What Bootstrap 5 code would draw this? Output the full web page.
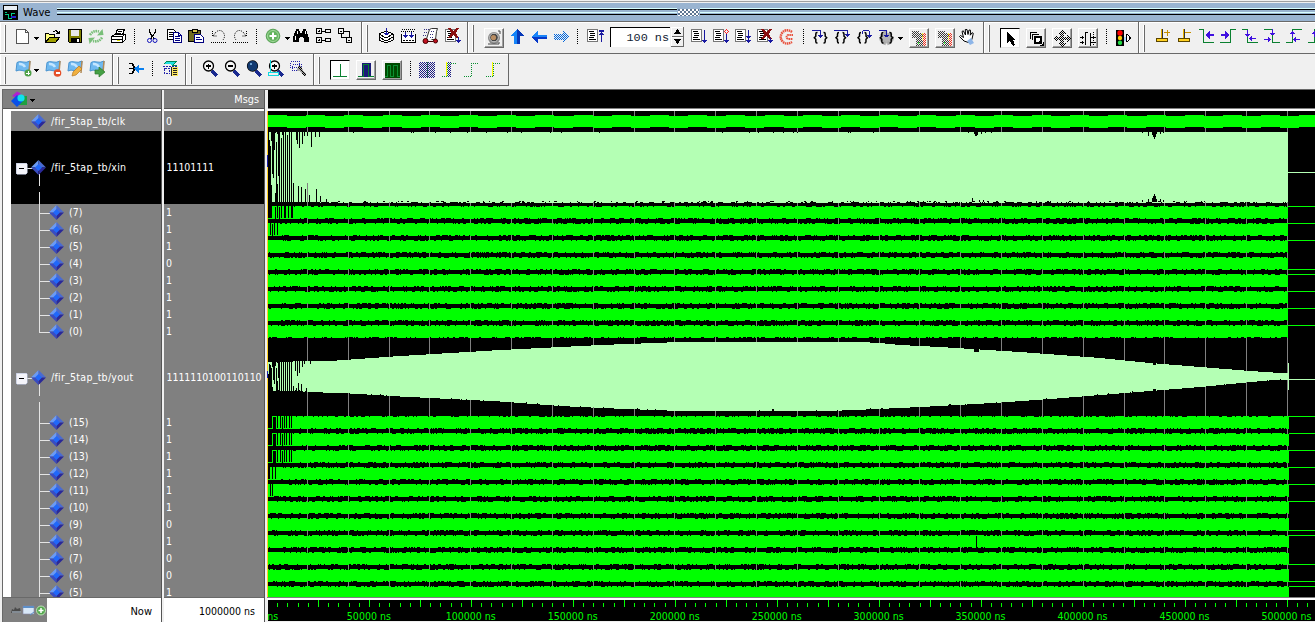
<!DOCTYPE html>
<html lang="en">
<head>
<meta charset="utf-8">
<title>Wave</title>
<meta name="viewport" content="width=device-width, initial-scale=1">
<link href="https://cdn.jsdelivr.net/npm/bootstrap@5.3.0/dist/css/bootstrap.min.css" rel="stylesheet">
<style>
body{width:1315px;height:622px;background:#f0f0f0;font:10.5px/13px "DejaVu Sans Condensed","DejaVu Sans",sans-serif;font-stretch:condensed;color:#000}
svg{display:block;flex:none;shape-rendering:crispEdges}
.topline{height:2px;border-bottom:1px solid #a0a0a0}
.titlebar{height:20px;background:#99b4d1;border-bottom:1px solid #696969;border-top:1px solid #f0f0f0}
.appicon{margin-left:2px}
.title-txt{font-size:11.2px;width:35px;padding-left:1px}
.rule{height:7px;margin-top:-1px;background:linear-gradient(#d8ffff 0 1px,#000 1px 2px,#99b4d1 2px 4px,#d8ffff 4px 5px,#99b4d1 5px 6px,#000 6px 7px)}
.rule-a{width:620px}
.dotgrip{width:21px;height:7px;background:repeating-conic-gradient(#fff 0 25%,#5d7591 0 50%) 0 0/4px 4px;margin:0 1px}
.tools{height:32px}
.group{border-right:1px solid #696969;border-bottom:1px solid #696969;box-shadow:inset 1px 1px #fff;height:32px;padding-top:4px;flex:none}
.grip{width:2px;height:27px;margin:-1px 0 0 4px;border-left:1px solid #fff;border-right:1px solid #696969;flex:none}
.ic{width:22px;height:22px}
.car{width:8px;height:22px;flex:none}
.sepr{width:11px;height:15px;margin-top:3px;flex:none;background:repeating-linear-gradient(#000 0 1px,transparent 1px 2px) 5px 0/1px 100% no-repeat}
.tbtn{width:20px;height:20px;margin:2px 1px 0;border:1px solid #fff;border-right-color:#696969;border-bottom-color:#696969;box-shadow:inset -1px -1px #a0a0a0;flex:none;overflow:hidden}
.tbtn.down{background:#fff;border-color:#000 #e3e3e3 #e3e3e3 #000;box-shadow:none}
.tbtn svg{margin:-2px}
.ml4{margin-left:5px}
.run{width:60px;height:20px;margin:1px 1px 0 4px;border:1px solid #000;border-width:1px 0 0 1px;background:#fff;font:11.8px/21px "Liberation Mono",monospace;color:#123;text-align:right;padding-right:1px;flex:none}
.spin{width:14px;margin:1px 3px 0 0;flex:none}
.gap-y{height:3px}
.panes{height:533px;border-top:1px solid #696969;margin-left:2px}
.hd{height:19px;border-bottom:1px solid #555;background:#808080;color:#fff}
.hd-msgs{padding:3px 5px 0 0;font-size:10.8px}
.hd-wave{background:#000;border-bottom-color:#808080;margin-left:1px}
.body-h{height:488px;border-top:2px solid #fff;overflow:hidden}
.names{width:160px;border-left:1px solid #696969;border-right:1px solid #555;background:#fff;flex:none}
.vals{width:101px;margin-left:2px;border-right:1px solid #555;flex:none;background:#808080}
.names .body-h{padding-left:8px}
.wavep{margin-left:2px;width:1048px;flex:none}
.sig,.val{background:#808080;color:#fff}
.sig span{letter-spacing:.27px}
.sig.r17 span{letter-spacing:.05px}
.sig.sel,.val.sel{background:#000}
.r20{height:20px}.r73{height:73px}.r74{height:74px}.r17{height:17px}
.val{padding-left:2px}.val.wide{padding-left:2.5px;letter-spacing:-.07px}
.foot{height:25px;border-top:1px solid #696969;background:#fff;padding-top:2px}
.ficons{width:44px;background:#808080;flex:none;margin-top:-2px;height:24px}
.now-l{padding-right:9px;font-size:11px}
.now-v{padding-right:9px}
#ruler text{font:10.5px "DejaVu Sans Condensed","DejaVu Sans",sans-serif;font-stretch:condensed;fill:#0f0;text-anchor:middle}
</style>
</head>
<body class="overflow-hidden m-0">
<svg width="0" height="0" class="position-absolute"><defs>
<pattern id="ht" width="2" height="2" patternUnits="userSpaceOnUse"><rect width="1" height="1" fill="#000"/><rect x="1" y="1" width="1" height="1" fill="#000"/></pattern>
<pattern id="hb" width="2" height="2" patternUnits="userSpaceOnUse"><rect width="1" height="1" fill="#1c1c80"/><rect x="1" y="1" width="1" height="1" fill="#1c1c80"/></pattern>
<pattern id="hr" width="2" height="2" patternUnits="userSpaceOnUse"><rect width="1" height="1" fill="#f03020"/><rect x="1" y="1" width="1" height="1" fill="#f03020"/></pattern>
<pattern id="hc" width="2" height="2" patternUnits="userSpaceOnUse"><rect width="1" height="1" fill="#06d"/><rect x="1" y="1" width="1" height="1" fill="#06d"/></pattern>
<symbol id="new"><path d="M5.500 3.500h9l3 3v11h-12z" fill="#fff" stroke="#555"/><path d="M14.500 3.500v3h3" fill="none" stroke="#555"/></symbol>
<symbol id="open"><path d="M4.500 16V7.500h3l1 1h5v3" fill="#ffff80" stroke="#000"/><path d="M4.500 16.500l4-5h10l-4 5z" fill="#a0a000" stroke="#000"/><path d="M12 5.500h1l2-1 2 2v1M15 7.500h4M18.500 5v3" fill="none" stroke="#000"/></symbol>
<symbol id="save"><path d="M5.500 3.500h13v13h-12l-1-1z" fill="#808000" stroke="#000"/><path d="M8 4h8v6h-8z" fill="#e8e8e8"/><path d="M8 12h9v5h-9z" fill="#000"/><path d="M14 13h2v3h-2z" fill="#fff"/></symbol>
<symbol id="refresh"><g shape-rendering="auto" fill="none" stroke="#79bf79" stroke-width="2.600" stroke-dasharray="1.600 .7"><path d="M5 9q3-5 9-3.500M17 11.500q-3 5-9 3.500"/></g><g shape-rendering="auto" fill="#79bf79"><path d="M12 9.500l6.500-.5-1-6zM10 11.500L3.500 12l1 6z"/></g></symbol>
<symbol id="print"><path d="M8.500 9l2-6h7l-2 6z" fill="#fff" stroke="#000"/><path d="M11 5.500h4M10 7.500h4" stroke="#000"/><path d="M4.500 10.500l3-2h11v5l-3 3h-11z" fill="#fff" stroke="#000"/><path d="M5 10.500h10l3-2M15.500 11v5M5 13.500h10" fill="none" stroke="#000"/><path d="M10 14h3v1h-3z" fill="#dd0"/></symbol>
<symbol id="cut"><path d="M8.500 3v3l5 7M14.500 3v3l-5 7" fill="none" stroke="#000" stroke-width="1.300"/><circle cx="8.500" cy="14.500" r="2" fill="none" stroke="#11b" shape-rendering="auto"/><circle cx="14" cy="14.500" r="2" fill="none" stroke="#11b" shape-rendering="auto"/></symbol>
<symbol id="copy"><path d="M4.500 3.500h6l2 2v8h-8z" fill="#fff" stroke="#000"/><path d="M6 6.500h4M6 8.500h5M6 10.500h4" stroke="#000"/><path d="M10.500 6.500h5l3 3v7h-8z" fill="#fff" stroke="#000080"/><path d="M12 10.500h5M12 12.500h5M12 14.500h5M15.500 6.500v3h3" fill="none" stroke="#000080"/></symbol>
<symbol id="paste"><path d="M3.500 4.500h12v11h-12z" fill="#706c20" stroke="#000"/><path d="M7 3h5v3h-5z" fill="#dcc850" stroke="#000"/><path d="M9.500 8.500h6l3 3v5h-9z" fill="#fff" stroke="#000080"/><path d="M11 11.500h4M11 13.500h6" stroke="#000080"/></symbol>
<symbol id="undo"><g fill="none" stroke="#000" shape-rendering="auto" stroke-dasharray="1 1"><path d="M5.500 5v5h5M6 10l3-4q4-3 7 0 3 4 0 8M4 16.500h15"/></g></symbol>
<symbol id="redo"><g fill="none" stroke="#000" shape-rendering="auto" stroke-dasharray="1 1"><path d="M17.500 5v5h-5M17 10l-3-4q-4-3-7 0-3 4 0 8M4 16.500h15"/></g></symbol>
<symbol id="plus"><g shape-rendering="auto"><circle cx="11" cy="10" r="6.800" fill="#62b35d" stroke="#5aa358"/><circle cx="11" cy="10" r="5.500" fill="none" stroke="#a4d89c"/><path d="M11 6.500v7M7.500 10h7" stroke="#fff" stroke-width="2"/></g></symbol>
<symbol id="bino"><path d="M6 3h3v2h1v2h2V5h1V3h3v2h1l1 5 1 2v4h-5v-4h-1v-1h-3v1h-1v4H3v-4l1-3 1-4h1z"/><path d="M5.500 10v4M7.500 5v3M15.500 5v3" stroke="#fff"/></symbol>
<symbol id="tree1"><path d="M4.500 2.500h5v5h-5zM4.500 11.500h5v5h-5zM6 5h2M6 14h2M7 4v2M7 13v2M10 5.500h3M10 14.500h3M13 3.500h5v3h-5zM13 12.500h5v3h-5z" fill="none" stroke="#000"/></symbol>
<symbol id="tree2"><path d="M4.500 2.500h5v5h-5zM12.500 11.500h5v5h-5zM6 5.500h2M14 14.500h2M10 5.500h5v5M7.500 8v3.500h5" fill="none" stroke="#000"/></symbol>
<symbol id="stack"><path d="M4 8l7-3 7 3-7 4zM4 11l7 4 7-4M4 14l7 3 7-3M4 8v6M18 8v6" fill="#fff" stroke="#000"/><path d="M11.500 2v7M9 7.500h5M10 8.500h3" stroke="#1818a0"/></symbol>
<symbol id="comp"><path d="M4.500 8v8.500h14V8" fill="#fff" stroke="#000"/><path d="M5 3.500h14M4 5.500h14" stroke="#000" stroke-dasharray="1 1"/><path d="M8.500 6v6M14.500 6v6M6 9.500h5M12 9.500h5M7 10.500h3M13 10.500h3" stroke="#1818a0"/><path d="M6 14.500h11" stroke="#000" stroke-dasharray="2 1"/></symbol>
<symbol id="script"><path d="M7.500 13l3-9.500 2-1h6l-1 3-1 8h-4" fill="#fff" stroke="#333" shape-rendering="auto"/><path d="M5 3.500h5M5 6.500h4M4 9.500h4M12 5.500h4M11 8.500h4M11 11.500h4" stroke="#333080" stroke-dasharray="1 1"/><g shape-rendering="auto"><circle cx="6.500" cy="15" r="2.500" fill="#c01020" stroke="#400"/><circle cx="16.500" cy="15" r="2" fill="#c01020" stroke="#400"/></g><path d="M9 15.500h5" stroke="#400"/></symbol>
<symbol id="doc"><path d="M4.500 3.500h10v12h-10z" fill="#fff" stroke="#777"/><path d="M6 5.500h5M7 7.500h5M7 9.500h5M6 11.500h5M6 13.500h7" stroke="#000"/></symbol>
<symbol id="docx"><use href="#doc"/><path d="M8 2l9 10M17 2L8 12" stroke="#8a1010" stroke-width="2.500"/><path d="M17.500 11v6M15 14.500h5M16 15.500h3" stroke="#1818a0"/></symbol>
<symbol id="snap"><g shape-rendering="auto"><circle cx="11" cy="11" r="6" fill="#888"/><path d="M15 4h2v3M5 17h11v-2" stroke="#444" fill="none"/><circle cx="11" cy="10.500" r="4.300" fill="#444" stroke="#ccc"/><circle cx="10.500" cy="10.500" r="2.600" fill="#b98d62"/></g></symbol>
<symbol id="up"><path d="M11 3l7 7h-4v8H8v-8H4z" fill="#1484f8"/><path d="M11 3l7 7h-4v8h-3z" fill="#0638b8"/></symbol>
<symbol id="left"><path d="M3 11l7-6v4h9v4h-9v4z" fill="#1984f8"/><path d="M3 11h16v2h-9v4z" fill="#0638c8"/></symbol>
<symbol id="right"><path d="M19 11l-6-6v3H4v6h9v3z" fill="url(#hc)"/></symbol>
<symbol id="restart"><g transform="translate(-1 0)"><use href="#doc"/></g><path d="M17.500 4v12M15 4.500h5M15 8.500h5M16 7.500h3M15 5.500h5" stroke="#1818a0"/></symbol>
<symbol id="rdown"><g transform="translate(-1 0)"><use href="#doc"/></g><path d="M16.500 4v13M14 14.500h5M15 15.500h3" stroke="#1818a0"/></symbol>
<symbol id="rred"><g transform="translate(-1 0)"><use href="#doc"/></g><path d="M16.500 8v9M14 14.500h5M15 15.500h3" stroke="#1818a0"/><path d="M16.500 3.500l2 2-2 2-2-2z" fill="none" stroke="#f22"/></symbol>
<symbol id="rdd"><g transform="translate(-1 0)"><use href="#doc"/></g><path d="M16.500 4v13M14 10.500h5M15 11.500h3M14 14.500h5M15 15.500h3" stroke="#1818a0"/></symbol>
<symbol id="rx"><g transform="translate(-1 0)"><use href="#doc"/></g><path d="M8 3l9 10M17 3L8 13" stroke="#8a1010" stroke-width="2.500"/><path d="M16.500 12v5M14 14.500h5M15 15.500h3" stroke="#1818a0"/></symbol>
<symbol id="stop"><g fill="none" stroke="#e8503c" shape-rendering="auto" stroke-dasharray="1.500 .6"><path d="M16 6q-6-4-10 1-3 5 1 9 4 3 9 0" stroke-width="2.500"/><path d="M17 9h-5q-3 2 0 4h5" stroke-width="2"/></g></symbol>
<symbol id="br"><g fill="none" stroke="#000" stroke-width="1.500" shape-rendering="auto"><path d="M8.500 6.500H8Q6.800 6.500 6.800 8v2.200L5.300 11.700l1.500 1.500v2.300q0 1.500 1.200 1.500h.5M14.500 6.500h.5q1.200 0 1.200 1.500v2.200l1.500 1.500-1.500 1.500v2.300q0 1.500-1.200 1.500h-.5"/></g></symbol>
<symbol id="brn"><g fill="none" stroke="#000" stroke-width="1.500" shape-rendering="auto"><path d="M8 6.500q-1.500 0-1.500 1.500v2.200L5 11.700l1.500 1.500v2.300Q6.500 17 8 17M11.500 6.500q1.500 0 1.500 1.500v2.200l1.500 1.500-1.500 1.500v2.300q0 1.500-1.500 1.500"/></g></symbol>
<symbol id="s1"><use href="#br"/><path d="M3 4.500h8.500v6M9 9.500h5M10 10.500h3M11 11.500h1" fill="none" stroke="#1818a0"/></symbol>
<symbol id="s2"><use href="#brn"/><path d="M3 4.500h13.500v5M14 8.500h5M15 9.500h3M16 10.500h1" fill="none" stroke="#1818a0"/></symbol>
<symbol id="s3"><use href="#brn"/><path d="M9.500 8V5.500l1-1h5l1 1v5M14 9.500h5M15 10.500h3M16 11.500h1" fill="none" stroke="#1818a0"/></symbol>
<symbol id="s4"><g shape-rendering="auto"><circle cx="11.500" cy="12" r="5.500" fill="#b4b4b4" stroke="#aaa" stroke-width="3.500" stroke-dasharray="3 1.600"/></g><use href="#br"/><path d="M4 4.500h7.500v6M9 9.500h5M10 10.500h3" fill="none" stroke="#1818a0"/></symbol>
<symbol id="dim"><path d="M4 4h7v2h6v13H8v-8H4z" fill="url(#ht)" opacity=".75"/><path d="M15 6h3v13h-3z" fill="url(#hr)"/><path d="M10.500 15v2" stroke="#3e3"/><path d="M14.500 6v7" stroke="#ee3" stroke-dasharray="2 1"/></symbol>
<symbol id="hand"><g shape-rendering="auto"><path d="M8 15L3.500 10.500l1-1 3 2-1.500-6 1.300-.7L9.500 9 9.300 3.500h1.700L12 8.500l1-4.500 1.500.2-.2 5 1.700-2.500 1.300.6L16 13l-2 4z" fill="#fff" stroke="#000"/><path d="M11 15l4-3 3 5-4 2z" fill="#8db5e8"/></g></symbol>
<symbol id="arrow"><path d="M8 5v11l3-2 3 5 2-1-2-5h3z"/></symbol>
<symbol id="rect"><path d="M5.500 12V5.500H12M7.500 13V7.500H14" fill="none" stroke="#000"/><path d="M10 10h6v6h-6z" fill="#fff" stroke="#000" stroke-width="2"/><path d="M14 14l4 4M18.500 15v3.500h-4" stroke="#000" fill="none"/></symbol>
<symbol id="move"><path d="M11 3l4 4h-2v3h3V8l4 4-4 4v-3h-3v3h2l-4 4-4-4h2v-3H6v3l-4-4 4-4v2h3V7H7z" fill="url(#ht)"/></symbol>
<symbol id="cursors"><path d="M11 5.500H8.500V18M13.500 6v13" stroke="#000" fill="none"/><path d="M16.500 5v14" stroke="#000" stroke-dasharray="1 1"/><path d="M3 10.500h4M3 15.500h4M14 10.500h5M14 15.500h5M5.500 9v3M5.500 14v3" stroke="#000"/></symbol>
<symbol id="light"><path d="M4 4h8v16H4z"/><g shape-rendering="auto"><circle cx="8" cy="7" r="2.700" fill="#f00"/><circle cx="8" cy="12" r="2.200" fill="#fc0"/><circle cx="8" cy="16.800" r="2.200" fill="#2d4"/></g><path d="M14.500 8.500h1l3 3.500-3 3.500h-1z" fill="#fff" stroke="#000"/><path d="M12 11h2v4h-2z" fill="#adf"/></symbol>
<symbol id="curp"><path d="M11.500 3v10" stroke="#333"/><path d="M10.500 3v10" stroke="#e8b000"/><path d="M5 12.500h11v3H5z" fill="#ffd020" stroke="#5a4500"/><path d="M13 6.500h6M16.500 4v6" stroke="#c89000" stroke-width="1.500"/></symbol>
<symbol id="curm"><path d="M11.500 3v10" stroke="#333"/><path d="M10.500 3v10" stroke="#e8b000"/><path d="M5 12.500h11v3H5z" fill="#ffd020" stroke="#5a4500"/><path d="M12 6.500h6" stroke="#c89000" stroke-width="1.500"/></symbol>
<symbol id="e1"><path d="M4 3.500h4.500v13H19" fill="none" stroke="#0a8030"/><path d="M10 9l5-4v3h4v2h-4v3z" fill="#4010e0"/></symbol>
<symbol id="e2"><path d="M3 16.500h10.500v-13H19" fill="none" stroke="#0a8030"/><path d="M12 9L8 5v3H4v2h4v3z" fill="#4010e0"/></symbol>
<symbol id="e3"><path d="M3 3.500h5.500v13H19" fill="none" stroke="#0a8030"/><path d="M8.500 4v7M6 8.500h5M7 9.500h3M10 12.500h7M12.500 10v5M11.500 11v3" fill="none" stroke="#4010e0"/></symbol>
<symbol id="e4"><path d="M3 3.500h8.500v13H19" fill="none" stroke="#0a8030"/><path d="M3 13.500h7M7.500 11v5M8.500 12v3M9 7.500h5M10 8.500h3M11.500 3v6" fill="none" stroke="#4010e0"/></symbol>
<symbol id="e5"><path d="M3 16.500h6.500v-13H19" fill="none" stroke="#0a8030"/><path d="M10 13.500h7M12.500 11v5M11.500 12v3M7 7.500h5M8 6.500h3M9.500 5v6" fill="none" stroke="#4010e0"/></symbol>
<symbol id="flag"><g shape-rendering="auto"><path d="M6 4.500q2-1.500 6-.5 3 1 7-1l-1 9q-4 2-7 .5-3-1-6 .5z" fill="#6fb9f0" stroke="#4a94d0"/><path d="M8 6q4-.5 6 3" stroke="#c5e6ff" stroke-width="2.500" fill="none"/><path d="M19 3l-1 12" stroke="#b08a58" stroke-width="1.500"/></g></symbol>
<symbol id="f1"><use href="#flag"/><circle cx="17" cy="15" r="3.500" fill="#4ea048" shape-rendering="auto"/><path d="M17 13v4M15 15h4" stroke="#fff"/></symbol>
<symbol id="f2"><use href="#flag"/><circle cx="16.500" cy="15" r="3.800" fill="#e4502a" shape-rendering="auto"/><path d="M14.500 15h4" stroke="#fff" stroke-width="1.500"/></symbol>
<symbol id="f3"><use href="#flag"/><path d="M9 18l1-4 6-6 3 3-6 6z" fill="#f0b040" stroke="#b87820" stroke-width=".7" shape-rendering="auto"/></symbol>
<symbol id="f4"><use href="#flag"/><path d="M10 12h4V9l6 5-6 5v-3h-4z" fill="#45a045" stroke="#2b7a2b" stroke-width=".7" shape-rendering="auto"/></symbol>
<symbol id="merge"><path d="M4 5.500h3l2 3v4l-2 3H4M4 10.500h5" fill="none" stroke="#000" stroke-width="1.600"/><path d="M9 10.500l5-4v3h5v2.500h-5v3z" fill="#0a80f0"/></symbol>
<symbol id="conv"><path d="M5 6l3-3h10l-4 4h4" fill="#20e0e0" stroke="#085"/><path d="M5.500 10.500h5v5h-5zM4 8.500h14" fill="none" stroke="#22a" stroke-dasharray="2 1"/><path d="M13 9h6v9h-6z" fill="#ffe860"/><path d="M14 10.500h4M14 12.500h4M14 14.500h4M14 16.500h4M12.500 9v9" stroke="#222"/></symbol>
<symbol id="lens"><path d="M13 13l5 5" stroke="#1a2a90" stroke-width="3"/><circle cx="9.500" cy="8" r="5" fill="#f8f8f8" stroke="#000" stroke-width="1.300" shape-rendering="auto"/></symbol>
<symbol id="z1"><use href="#lens"/><path d="M7 8h5M9.500 5.500v5" stroke="#000" stroke-width="1.500"/></symbol>
<symbol id="z2"><use href="#lens"/><path d="M7 8h5" stroke="#000" stroke-width="1.500"/></symbol>
<symbol id="z3"><use href="#lens"/><circle cx="9.500" cy="8" r="5" fill="#123a70" shape-rendering="auto"/><path d="M7 5h2v2H7z" fill="#6aa0d0"/></symbol>
<symbol id="z4"><use href="#lens"/><path d="M7 8h5M9.500 5.500v5" stroke="#000" stroke-width="1.500"/><path d="M5.500 2v12M3.500 14.500h10v3h-10z" fill="none" stroke="#10d8e0"/></symbol>
<symbol id="z5"><path d="M3.500 3.500h9v6h-9zM5.500 6.500h9v6h-9z" fill="none" stroke="#22a" stroke-dasharray="1 1"/><path d="M11 8h3l2 4 3 4v2h-2l-5-5h-2z" fill="#aaa"/><path d="M11 9l2-1 6 9-2 1z" fill="url(#ht)"/></symbol>
<symbol id="w1"><path d="M4 17.500h14M11.500 5v13" stroke="#088030"/></symbol>
<symbol id="w2"><path d="M7 4h9v14H7z" fill="#1a1a78"/><path d="M3 17.500h5.500v-12h5v12H19" fill="none" stroke="#088030"/></symbol>
<symbol id="w3"><path d="M4 4h15v15H4z" fill="#004a00"/><path d="M4 17.500h2.500v-11h3v11h3v-11h4v11h2" fill="none" stroke="#0a9030"/></symbol>
<symbol id="w4"><path d="M3 4h16v16H3z" fill="url(#hb)"/><path d="M11 4v15" stroke="#2b9040" stroke-dasharray="1 1"/></symbol>
<symbol id="w5"><path d="M9 4h4v15H9z" fill="url(#hb)"/><path d="M8.500 4v15" stroke="#ff0"/><path d="M4 18.500h5.500V5.500H19" fill="none" stroke="#0a9030" stroke-dasharray="1 1"/></symbol>
<symbol id="w6"><path d="M4 18.500h7.500V5.500H19" fill="none" stroke="#0a9030" stroke-dasharray="1 1"/></symbol>
<symbol id="w7"><path d="M10.500 4v15" stroke="#ff0"/><path d="M4 18.500h7.500V5.500H19" fill="none" stroke="#0a9030" stroke-dasharray="1 1"/></symbol>
<symbol id="car"><path d="M1 11h5v1H5v1H4v1H3v-1H2v-1H1z"/></symbol>
<symbol id="dia"><g shape-rendering="auto"><path d="M7.500 0L0 7.500h7.500z" fill="#6b9af4"/><path d="M7.500 0L15 7.500H7.500z" fill="#4a6ad0"/><path d="M0 7.500L7.500 15V7.500z" fill="#3a4cc0"/><path d="M15 7.500L7.500 15V7.500z" fill="#2a2898"/><path d="M7.500 4L11 7.500 7.500 11 4 7.500z" fill="#2068fa"/></g></symbol>
</defs></svg>

<div class="topline"></div>
<div class="titlebar d-flex align-items-center">
  <svg width="16" height="16" class="appicon"><path d="M1 1h15v15H1z" fill="#000"/><path d="M2 2h13v4H2z" fill="#e8eef4"/><path d="M3 10.500h3v4h3v-5h4M3 8.500h2" fill="none" stroke="#0c8"/><path d="M9 12h5v2H9z" fill="#22c"/></svg>
  <div class="title-txt ms-1">Wave</div>
  <div class="rule rule-a"></div><div class="dotgrip"></div><div class="rule flex-grow-1"></div>
</div>
<div class="tools d-flex" id="row1"></div>
<div class="tools d-flex" id="row2"></div>
<div class="gap-y"></div>

<div class="panes d-flex">
  <div class="names">
    <div class="hd"><svg width="40" height="18"><g shape-rendering="auto"><path d="M9 6l5-4.500 4 2-5 4z" fill="#b020d0"/><path d="M16 6h8v9h-8z" fill="#20a040"/><path d="M14 5l6 6-6 6-6-6z" fill="#0850e8"/><circle cx="18" cy="8" r="3.600" fill="#10e0f0"/></g><path d="M27 9h5v1h-1v1h-1v1h-1v-1h-1v-1h-1z" fill="#000"/></svg></div>
    <div class="body-h" id="names"></div>
    <div class="foot d-flex align-items-center"><div class="ficons d-flex align-items-center"><svg width="44" height="22"><g shape-rendering="auto"><path d="M8 14l1-4 2 1 1-3 2 2 3-1 1 5z" fill="#4a4a4a"/><path d="M9 13h9" stroke="#bcd"/><path d="M20 7h11v8H20z" fill="#d8e8f8" stroke="#88a" stroke-width=".6"/><path d="M20 8h11" stroke="#5d8fc8" stroke-width="2"/><path d="M27 16l4-3" stroke="#5d8fc8"/><circle cx="38" cy="11.500" r="4.500" fill="#55a850" stroke="#bfe4b8"/><path d="M38 9v5M35.500 11.500h5" stroke="#fff" stroke-width="1.500"/></g></svg></div><div class="ms-auto now-l">Now</div></div>
  </div>
  <div class="vals">
    <div class="hd hd-msgs text-end">Msgs</div>
    <div class="body-h" id="vals"></div>
    <div class="foot d-flex align-items-center justify-content-end"><div class="now-v">1000000 ns</div></div>
  </div>
  <div class="wavep">
    <div class="hd hd-wave"></div>
    <div class="body-h"><svg id="wave" width="1048" height="487" viewBox="267 111 1048 487"></svg></div>
    <svg id="ruler" width="1048" height="24" viewBox="267 598 1048 24"></svg>
  </div>
</div>

<script>
const ic=n=>`<svg class="ic"><use href="#${n}"/></svg>`;
const car=w=>`<svg class="car" style="width:${w}px"><use href="#car"/></svg>`;
const sep=(w=11)=>`<div class="sepr" style="width:${w}px"></div>`;
const btn=(n,c='')=>`<div class="tbtn ${c}">${ic(n)}</div>`;
// one toolbar group: total width, gap after the grip, content
const grp=(w,pad,html)=>`<div class="group d-flex align-items-start" style="width:${w}px"><div class="grip"></div><div class="d-flex" style="margin-left:${pad-6}px">${html}</div></div>`;
const all=s=>s.split(' ').map(ic).join('');
row1.innerHTML=
 grp(362,11,ic('new')+car(8)+all('open save refresh print')+sep(12)+all('cut copy paste undo redo')+sep()+ic('plus')+car(6)+all('bino tree1 tree2'))+
 grp(106,13,all('stack comp script docx'))+
 grp(516,15,btn('snap')+'<i style="width:1px"></i>'+all('up left right')+sep(12)+ic('restart')+
  `<div class="run">100 ns</div><svg class="spin" width="14" height="20"><path d="M0 0h13v20H0z" fill="#f0f0f0"/><path d="M0 9.500h13M12.500 0v20M0 19.500h13" stroke="#696969"/><path d="M0 10.500h12M.5 0v19M0 .5h12" stroke="#fff"/><path d="M3 7h7L6.500 2zM3 12h7L6.500 17z"/></svg>`+
  all('rdown rred rdd rx stop')+sep()+all('s1 s2 s3 s4')+car(7)+btn('dim','ml4')+btn('dim','ml4')+all('hand'))+
 grp(155,15,btn('arrow','down')+btn('rect','ml4')+btn('move','ml4')+btn('cursors','ml4')+'<i style="width:2px"></i>'+sep()+ic('light'))+
 grp(200,12,all('curp curm e1 e2 e3 e4 e5 e5'));
row2.innerHTML=
 grp(113,11,ic('f1')+car(8)+all('f2 f3 f4'))+
 grp(73,12,ic('merge')+sep(12)+ic('conv'))+
 grp(128,13,all('z1 z2 z3 z4 z5'))+
 grp(195,15,btn('w1','down')+btn('w2','ml4')+btn('w3','ml4')+'<i style="width:2px"></i>'+sep()+all('w4 w5 w6 w7'));

// signal list: name, value, row class
const xb=[1,1,1,0,1,1,1,1], yb=[1,1,1,1,1,1,0,1,0,0,1];
const rows=[['/fir_5tap_tb/clk','0','r20'],['/fir_5tap_tb/xin','11101111','r73 sel'],
 ...xb.map((v,i)=>[`(${7-i})`,v,'r17']),['/fir_5tap_tb/yout','1111110100110110','r74'],...yb.map((v,i)=>[`(${15-i})`,v,'r17'])];
rows.forEach(([n,v,c],i)=>{
 const h=+c.match(/\d+/)[0], m=h/2|0, bit=h===17; let g='';
 if(bit) g=`<path d="M28.500 0v${i===9?9:17}M28 ${m+1.500}h11" stroke="#e4e4e4" fill="none"/><use href="#dia" x="38" y="${m-7}" width="15" height="15"/>`;
 else if(h===20) g=`<use href="#dia" x="20" y="3" width="15" height="15"/>`;
 else g=`<path d="M16 ${m+1.500}h6M28.500 ${m+7}V${m+19}M28.500 ${m+25}V${h}" stroke="#e4e4e4"/><rect x="5" y="${m-4}" width="11" height="11" rx="1" fill="#f4f4fa" stroke="#b8c0d8" stroke-width=".6"/><path d="M8 ${m+1.500}h5" stroke="#000" stroke-width="1.400"/><use href="#dia" x="20" y="${m-7}" width="15" height="15"/>`;
 names.insertAdjacentHTML('beforeend',`<div class="sig ${c} d-flex align-items-center"><svg width="${bit?58:40}" height="${h}">${g}</svg><span>${n}</span></div>`);
 vals.insertAdjacentHTML('beforeend',`<div class="val ${c} ${(v+'').length>1?'wide':''} d-flex align-items-center">${v}</div>`);
});

// waveform canvas
let s=7; const rnd=()=>(s=(s*16807)%2147483647)/2147483647;
let out='<rect x="267" y="111" width="1048" height="487" fill="#000"/>';
const R=(x,y,w,h)=>`M${x} ${y}h${w}v${h}h${-w}z`;
const P=(d,f)=>out+=`<path d="${d}" fill="${f}"/>`;
let d=''; for(let k=0;k<25;k++) d+=R(Math.floor(307.5+40.83*k),111,1,487); P(d,'#808080');
d=R(268,116,1047,11); for(let k=0;k<28;k++){const a=Math.round(268+38.2*k),b=Math.round(287+38.2*k);d+=R(a,115,b-a,1)+R(b,127,19,1);} P(d,'#0f0');
function edge(x,e,y,p){let r='';while(x<e){let g=1+Math.floor(rnd()*rnd()*16);g=Math.min(g,e-x);r+=R(x,y,g,1);x+=g+1+Math.floor(rnd()*rnd()*p);}return r;}
function bit(y,end,v,pulse){
 const st=pulse?pulse[0]:268;
 let q=R(st,y+1,end-st,11)+edge(st,end,y,6)+edge(st,end,y+12,7)+R(end,v?y:y+12,1315-end,1);
 if(pulse){let last=268;pulse[1].forEach(([a,b])=>{q+=R(last,y+12,a-last+1,1)+R(a,y,1,13)+R(a,y,b-a,1)+R(b-1,y,1,13);last=b-1;});q+=R(last,y+12,st-last,1);}
 P(q,'#0f0');
}
xb.forEach((v,i)=>bit(206+17*i,1288,v,i===0?[293,[[272,274],[274,277],[278,281],[282,284],[286,288],[289,291]]]:i===1?[278,[[268,270],[271,274],[275,277]]]:null));
yb.forEach((v,i)=>bit(416+17*i,1289,v,i<3?[292,[[272,277],[278,280],[281,284],[285,286],[287,289],[290,291]]]:i===3?[276,[[270,272],[273,275]]]:i===4?[273,[[268,270],[271,272]]]:null));
P(R(976,536,1,12),'#000');
const L='#b4ffb4';
// xin
P(R(293,132,995,70)+R(1288,172,27,1)+edge(320,1288,202,10),L);
d='';[[269,132,8],[270,132,14],[271,141,44],[272,174,28],[273,178,24],[274,150,52],[275,133,60],[276,132,10],[277,134,50],[278,176,26],[280,132,70],[281,132,6],[282,135,67],[284,132,70],[286,132,70],[287,132,3],[288,132,70],[290,132,70],[292,132,70]].forEach(a=>d+=R(a[0],a[1],1,a[2]));P(d,L);
d='';[[296,132,8],[297,132,12],[299,132,16],[302,132,12],[304,132,4],[307,132,4],[311,132,15],[315,132,5],[319,132,5],[293,183,19],[298,186,16],[301,187,15],[305,189,13],[309,195,7],[316,189,13],[320,196,6],[326,199,3],
[974,132,2],[975,132,4],[976,132,4],[977,132,3],[981,132,2],[985,132,1],[1142,132,1],[1148,132,4],[1152,132,3],[1153,132,5],[1154,132,7],[1155,132,5],[1156,132,2],[1160,132,2],[1163,132,1],
[972,198,4],[979,200,2],[983,200,2],[1142,200,2],[1148,199,3],[1152,198,4],[1153,196,6],[1154,194,8],[1155,196,6],[1156,199,3],[1160,199,3],[1163,200,2]].forEach(a=>d+=R(a[0],a[1],1,a[2]));
for(let k=0;k<75;k++)d+=R(325+Math.floor(rnd()*960),201,1+Math.floor(rnd()*2),1);
for(let k=0;k<24;k++)d+=R(325+Math.floor(rnd()*700),132,1,1);
P(d,'#000');P(R(307,183,1,19),'#808080');
// yout envelope
const T=[[293,361],[330,361],[350,359.500],[400,356],[500,350],[600,345],[680,342],[860,342],[880,343],[900,345],[940,347],[972,349],[1020,352],[1100,358],[1150,363],[1200,367],[1250,371],[1280,373],[1288,373]];
const B=[[293,391],[308,392],[350,393.500],[400,396.500],[500,401.500],[560,406],[600,408],[680,411],[830,411],[900,408],[958,405],[1000,402.500],[1050,399],[1100,395],[1150,391],[1200,387],[1250,382],[1275,380],[1288,380]];
const at=(a,x)=>{for(let i=1;i<a.length;i++)if(x<=a[i][0]){const p=a[i-1],q=a[i];return p[1]+(q[1]-p[1])*(x-p[0])/(q[0]-p[0]);}return a.at(-1)[1];};
d='';for(let x=293;x<1288;x++){let a=Math.round(at(T,x)),b=Math.round(at(B,x)); if(x>973&&x<979)a+=3; if(x>1152&&x<1156){a+=2;b-=2;} if(rnd()<.04)b-=1; if(x>771&&x<774)b-=2; d+=R(x,a,1,b-a);}
d+=R(1288,363,1,27)+R(1289,379,26,1);
[[268,362,12],[269,362,2],[270,362,3],[271,362,6],[272,367,20],[273,380,11],[274,384,7],[275,366,25],[276,362,6],[277,363,18],[278,378,12],[280,362,29],[282,362,29],[284,362,29],[286,362,29],[288,362,29],[290,362,29],[292,362,29]].forEach(a=>d+=R(a[0],a[1],1,a[2]));
P(d,L);
d='';[[295,361,10],[297,361,15],[299,361,12],[302,361,6],[304,361,3],[310,361,3],[293,386,5],[298,383,9],[301,384,8],[306,388,4],[296,388,3]].forEach(a=>d+=R(a[0],a[1],1,a[2]));P(d,'#000');
P(R(267,111,1,487),'#ffd020');P(R(267,155,1,12)+R(267,371,1,7),'#1818a0');
wave.innerHTML=out;

// time ruler; the label at zero shows only its unit
let r='<rect x="267" y="598" width="1048" height="1" fill="#808080"/><rect x="267" y="599" width="1048" height="2" fill="#fff"/><rect x="268" y="601" width="1047" height="21" fill="#000"/>';d='';
for(let k=1;k<103;k++){const x=Math.floor(267.500+10.196*k);d+=k%5?R(x,604,1,4):R(x,601,1,7);}
r+=`<path d="${d}" fill="#0f0"/><text x="272.700" y="621">ns</text>`;
for(let k=1;k<=10;k++)r+=`<text x="${266.900+101.950*k}" y="621">${k*50000} ns</text>`;
ruler.innerHTML=r;
</script>
<script src="https://cdn.jsdelivr.net/npm/bootstrap@5.3.0/dist/js/bootstrap.bundle.min.js"></script>
</body>
</html>
